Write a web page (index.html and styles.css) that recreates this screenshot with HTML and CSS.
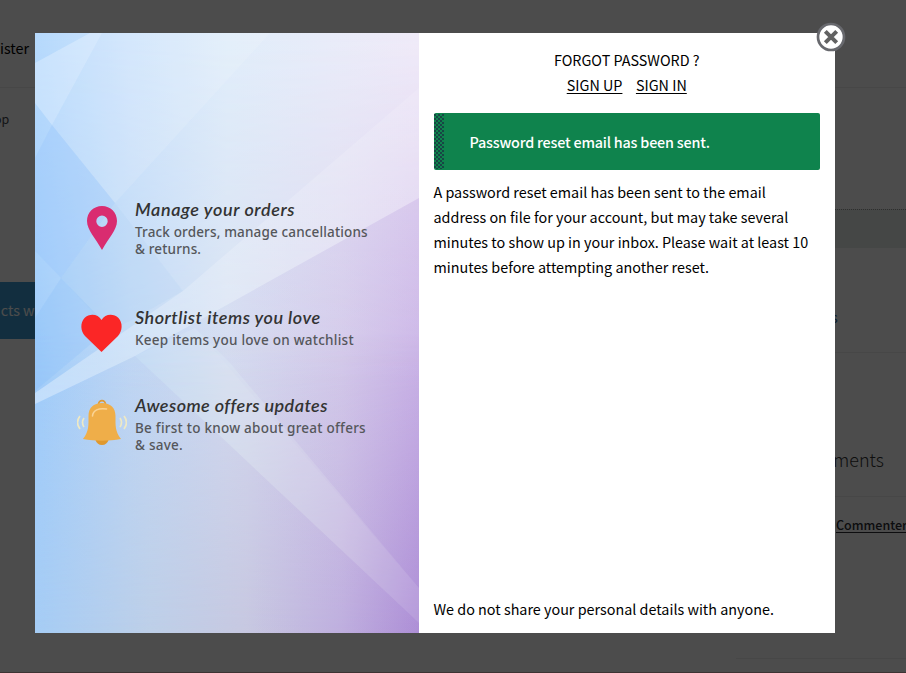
FILE: index.html
```html
<!DOCTYPE html>
<html lang="en">
<head>
<meta charset="utf-8">
<title>Forgot password</title>
<link rel="stylesheet" href="styles.css">
</head>
<body>
<div class="page">
  <header class="page-header">ister</header>
  <div class="page-body">
    <main class="page-main">
      <p class="crumb">op</p>
      <div class="notice">ucts w</div>
    </main>
    <aside class="sidebar">
      <div class="totals"></div>
      <div class="widget-link"><a>s</a></div>
      <h2 class="widget-title">ments</h2>
      <div class="comments"><a>Commenter</a></div>
    </aside>
  </div>
</div>
<div class="overlay">
  <div class="modal">
    <button class="close" aria-label="Close">
      <svg width="30" height="30" viewBox="0 0 30 30"><circle cx="15" cy="15" r="13" fill="#fff" stroke="#68696e" stroke-width="2.700"/><path d="M9.300 9.300 20.700 20.700M20.700 9.300 9.300 20.700" stroke="#626262" stroke-width="4"/></svg>
    </button>
    <section class="promo">
      <svg class="promo-bg" viewBox="0 0 384 600" preserveAspectRatio="none">
        <defs>
          <linearGradient id="top"><stop offset="0" stop-color="#b6d9fc"/><stop offset=".25" stop-color="#cfe4fc"/><stop offset=".5" stop-color="#e0edfa"/><stop offset="1" stop-color="#f0ebf8"/></linearGradient>
          <linearGradient id="mid"><stop offset="0" stop-color="#9fccfb"/><stop offset=".25" stop-color="#c1daf6"/><stop offset=".5" stop-color="#d8e1f2"/><stop offset=".8" stop-color="#dbd4ed"/><stop offset="1" stop-color="#d3c0eb"/></linearGradient>
          <linearGradient id="low"><stop offset="0" stop-color="#a5ccf5"/><stop offset=".3" stop-color="#bfd3e9"/><stop offset=".55" stop-color="#cbcfe2"/><stop offset=".8" stop-color="#c3b6e0"/><stop offset="1" stop-color="#b093d7"/></linearGradient>
          <linearGradient id="fadeTop" x2="0" y2="1"><stop offset="0" stop-color="#fff"/><stop offset=".6" stop-color="#000"/></linearGradient>
          <linearGradient id="fadeLow" x2="0" y2="1"><stop offset=".5" stop-color="#000"/><stop offset="1" stop-color="#fff"/></linearGradient>
          <linearGradient id="shade"><stop offset="0" stop-color="#8b6fd0" stop-opacity="0"/><stop offset="1" stop-color="#9a70ce" stop-opacity=".14"/></linearGradient>
          <linearGradient id="beam"><stop offset="0" stop-color="#fff" stop-opacity=".36"/><stop offset=".4" stop-color="#fff" stop-opacity=".2"/><stop offset="1" stop-color="#fff" stop-opacity=".12"/></linearGradient>
          <mask id="mTop"><rect width="384" height="600" fill="url(#fadeTop)"/></mask>
          <mask id="mLow"><rect width="384" height="600" fill="url(#fadeLow)"/></mask>
        </defs>
        <rect width="384" height="600" fill="url(#mid)"/>
        <rect width="384" height="600" fill="url(#top)" mask="url(#mTop)"/>
        <rect width="384" height="600" fill="url(#low)" mask="url(#mLow)"/>
        <path d="M0 30 55 0H67L17 92 0 70Z" fill="#fff" opacity=".27"/>
        <path d="M17 92 80 170 26 245 0 218V125Z" fill="#8fbffa" opacity=".25"/>
        <path d="M26 245 75 295 0 358V285Z" fill="#6eaff5" opacity=".15"/>
        <path d="M17 92 67 0H235L80 170Z" fill="#fff" opacity=".12"/>
        <path d="M80 170 148 258 75 299 26 245Z" fill="#9cc3f2" opacity=".12"/>
        <path d="M0 360 148 258 384 55V165L100 323 0 371Z" fill="url(#beam)"/>
        <path d="M100 323 384 165V555L195 330 160 295Z" fill="url(#shade)"/>
        <path d="M100 323 160 295 384 555V590Z" fill="#fff" opacity=".06"/>
        <path d="M100 323 384 590V600H0V371Z" fill="url(#shade)"/>
      </svg>
      <ul class="features">
        <li class="feature orders">
          <svg class="icon" width="50" height="50" viewBox="0 0 50 50"><path fill="#d92c70" fill-rule="evenodd" d="M25 3c8.500 0 15 6.500 15 15C40 27 31 36 25 47 19 36 10 27 10 18 10 9.500 16.500 3 25 3Zm0 9.500a5.700 5.700 0 1 0 0 11.400 5.700 5.700 0 0 0 0-11.400Z"/></svg>
          <div><h3 class="t1">Manage your orders</h3><p>Track orders, manage cancellations<br>&amp; returns.</p></div>
        </li>
        <li class="feature love">
          <svg class="icon" width="50" height="50" viewBox="0 0 50 50"><path fill="#fb2626" d="M24.500 45 8 29C3.500 24 3 16 7.500 11c5-5 13.500-4.300 17 2 3.500-6.300 12-7 17-2 4.500 5 4 13-.5 18Z"/></svg>
          <div><h3 class="t2">Shortlist items you love</h3><p class="s3">Keep items you love on watchlist</p></div>
        </li>
        <li class="feature offers">
          <svg class="icon" width="50" height="50" viewBox="0 0 50 50"><circle cx="25" cy="6" r="3.400" fill="none" stroke="#df9a35" stroke-width="1.700"/><path d="M18 41h14q-2 6-7 6t-7-6" fill="#df982e"/><path fill="#efae49" d="M25 5c8.500 0 13.500 5 13.500 13 0 10-.5 15 5.500 23-12 2.300-26 2.300-38 0 6-8 5.500-13 5.500-23C11.500 10 16.500 5 25 5Z"/><path d="M15.500 18c.5-6 6-8 14-7" fill="none" stroke="#fad394" stroke-width="1.600" stroke-linecap="round"/><path d="M3 18q-5 6.500 0 13M7 20q-3 4.500 0 9M47 18q5 6.500 0 13M43 20q3 4.500 0 9" fill="none" stroke="#eee9c5" stroke-width="1.700"/></svg>
          <div><h3 class="t3">Awesome offers updates</h3><p class="s4">Be first to know about great offers<br>&amp; save.</p></div>
        </li>
      </ul>
    </section>
    <section class="form">
      <div class="tabs">
        <div class="ttl">FORGOT PASSWORD ?</div>
        <div class="links"><a>SIGN UP</a><a>SIGN IN</a></div>
      </div>
      <div class="message"><i class="grain"></i><span>Password reset email has been sent.</span></div>
      <p class="info">A password reset email has been sent to the email<br>address on file for your account, but may take several<br>minutes to show up in your inbox. Please wait at least 10<br>minutes before attempting another reset.</p>
      <p class="privacy">We do not share your personal details with anyone.</p>
    </section>
  </div>
</div>
</body>
</html>
```
FILE: styles.css
```css
* { box-sizing: border-box; margin: 0; padding: 0; }
body {
  width: 906px; height: 673px; overflow: hidden; background: #fff;
  font-family: "Noto Sans CJK SC", "Noto Sans", sans-serif;
  font-size: 14.36px; line-height: 25px; color: #000;
}
.page { width: 906px; height: 673px; overflow: hidden; border-bottom: 1px solid #caa; }
.page-header { height: 88px; padding-top: 35px; border-bottom: 1px solid #eee; }
.page-body { display: flex; justify-content: space-between; }
.page-main { width: 400px; }
.crumb { height: 194px; margin-left: -6px; padding-top: 18px; font-size: 12.5px; color: #43454b; }
.notice { height: 57px; padding-top: 15px; background: #3d9cd2; color: #fff; white-space: nowrap; text-indent: -8px; }
.sidebar { width: 170px; height: 571px; border-bottom: 1px solid #eee; }
.totals { height: 39px; margin-top: 121px; background: #e7eeec; border-top: 1px dotted #999; }
.widget-link { height: 105px; padding: 56px 0 0 95px; border-bottom: 1px solid #eee; color: #2c6a9c; }
.widget-title { height: 144px; padding: 94px 0 0 97px; border-bottom: 1px solid #eee; font-size: 18px; font-weight: 300; color: #333; }
.comments { padding: 15px 0 0 100px; font-size: 12.5px; font-weight: 500; color: #2c2d33; text-decoration: underline; text-underline-offset: 2px; }
.overlay { position: absolute; inset: 0; background: rgba(0, 0, 0, .7); padding: 33px 35px; }
.modal { position: relative; display: flex; width: 800px; height: 600px; background: #fff; }
.close { position: absolute; z-index: 2; right: -11px; top: -11px; width: 30px; height: 30px; border: 0; background: none; }
.close svg, .icon { display: block; }
.promo { position: relative; width: 384px; height: 600px; overflow: hidden; }
.promo-bg { position: absolute; inset: 0; width: 384px; height: 600px; }
.features { position: relative; list-style: none; padding: 163px 0 0 42px; }
.feature { display: flex; gap: 8px; }
.feature .icon { flex: none; }
.orders { height: 108px; }
.orders .icon { margin-top: 7px; }
.love { height: 88px; }
.love .icon { margin-top: 3px; }
.offers .icon { margin-top: 6px; }
.feature h3 { height: 28px; font: italic 600 18px/27px Lato, sans-serif; color: #333; white-space: nowrap; }
.t1 { letter-spacing: .6px; }
.t2 { letter-spacing: .5px; }
.t3 { letter-spacing: .42px; }
.feature p { font: 500 13.5px/17px "Noto Sans", sans-serif; letter-spacing: .15px; color: #55575b; white-space: nowrap; }
.feature .s3, .feature .s4 { letter-spacing: .25px; }
.form { display: flex; flex-direction: column; width: 416px; padding: 14px 15px 12px 14.5px; }
.tabs { text-align: center; }
.links { display: flex; justify-content: center; gap: 13.5px; }
.links a { text-decoration: underline; text-underline-offset: 2px; }
.message { display: flex; align-items: center; height: 57px; margin: 16px 0 9px; padding-bottom: 1px; border-radius: 2px; background: #0f834d; color: #fff; font-weight: 500; letter-spacing: -.2px; }
.grain {
  width: 10px; height: 55px; margin-right: 26px;
  background-image: radial-gradient(circle at 1px 1px, #174444 .7px, transparent .9px), radial-gradient(circle at 3px 3px, #174444 .7px, transparent .9px);
  background-size: 4px 4px;
}
.info, .privacy { white-space: nowrap; }
.privacy { margin-top: auto; }
```
